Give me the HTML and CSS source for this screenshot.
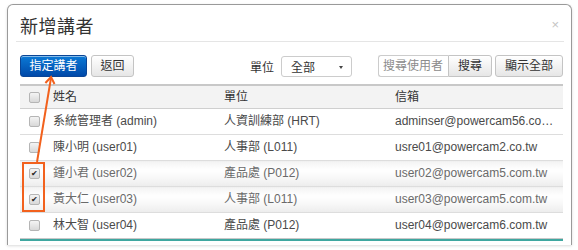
FILE: index.html
```html
<!DOCTYPE html>
<html lang="zh-Hant">
<head>
  <meta charset="UTF-8">
  <title>新增講者</title>
  <link rel="stylesheet" href="styles.css">
</head>
<body>

  <div class="modal">
    <div class="modal-header">
      <h3>新增講者</h3>
      <span class="close">×</span>
    </div>

    <div class="modal-body">
      <div class="toolbar">
        <div class="toolbar-left">
          <button class="btn btn-primary">指定講者</button>
          <button class="btn btn-back">返回</button>
        </div>
        <div class="toolbar-right">
          <span class="label">單位</span>
          <div class="select">全部<span class="caret"></span></div>
          <div class="search">
            <input type="text" placeholder="搜尋使用者">
            <button class="btn">搜尋</button>
          </div>
          <button class="btn btn-all">顯示全部</button>
        </div>
      </div>

      <div class="table-wrap">
        <table class="user-table">
          <colgroup>
            <col class="col-check">
            <col class="col-name">
            <col class="col-unit">
            <col class="col-mail">
          </colgroup>
          <thead>
            <tr>
              <th><span class="cb"></span></th>
              <th>姓名</th>
              <th>單位</th>
              <th>信箱</th>
            </tr>
          </thead>
          <tbody>
            <tr>
              <td><span class="cb"></span></td>
              <td>系統管理者 (admin)</td>
              <td>人資訓練部 (HRT)</td>
              <td>adminser@powercam56.com.tw</td>
            </tr>
            <tr>
              <td><span class="cb"></span></td>
              <td>陳小明 (user01)</td>
              <td>人事部 (L011)</td>
              <td>usre01@powercam2.co.tw</td>
            </tr>
            <tr class="selected">
              <td><span class="cb checked">✔</span></td>
              <td>鍾小君 (user02)</td>
              <td>產品處 (P012)</td>
              <td>user02@powercam5.com.tw</td>
            </tr>
            <tr class="selected">
              <td><span class="cb checked">✔</span></td>
              <td>黃大仁 (user03)</td>
              <td>人事部 (L011)</td>
              <td>user03@powercam5.com.tw</td>
            </tr>
            <tr>
              <td><span class="cb"></span></td>
              <td>林大智 (user04)</td>
              <td>產品處 (P012)</td>
              <td>user04@powercam6.com.tw</td>
            </tr>
          </tbody>
        </table>
      </div>
    </div>
  </div>

  <!-- annotation: box round the checked rows, arrow to the button -->
  <svg class="annot" width="578" height="250" viewBox="0 0 578 250">
    <rect x="23" y="163" width="21" height="48" fill="none" stroke="#f2611d" stroke-width="2"/>
    <line x1="37" y1="162" x2="51" y2="78" stroke="#f2611d" stroke-width="2"/>
    <polyline points="45.4,83 51,77 54.5,84" fill="none" stroke="#f2611d" stroke-width="2"/>
  </svg>

</body>
</html>
```

FILE: styles.css
```css
body {
  margin: 0;
  background-color: #fff;
  font-family: "Liberation Sans", "Noto Sans CJK TC", sans-serif;
  color: #333;
  width: 578px;
  height: 250px;
  position: relative;
  overflow: hidden;
}

.modal {
  margin: 4px 0 0 7px;
  width: 565px;
  height: 241px;
  box-sizing: border-box;
  background-color: #fff;
  border: 1px solid #9a9a9a;
  border-bottom: none;
  border-radius: 6px 6px 0 0;
  box-shadow: 0 1px 3px rgba(0, 0, 0, 0.15);
}

.modal-header {
  margin: 0 7px 0 8px;
  padding: 8px 4px 0;
  height: 37px;
  box-sizing: border-box;
  border-bottom: 1px solid #e5e5e5;
  display: flex;
  justify-content: space-between;
  align-items: center;
}

.modal-header h3 {
  margin: 0;
  font-size: 18px;
  font-weight: normal;
  line-height: 24px;
  color: #333;
  letter-spacing: 0.5px;
}

.close {
  font-size: 13px;
  color: #c4c4c4;
  margin-right: 1px;
  margin-top: -6px;
}

.modal-body {
  padding: 13px 8px 0 12px;
}

.toolbar {
  display: flex;
  justify-content: space-between;
  align-items: center;
  height: 22px;
}

.toolbar-left,
.toolbar-right {
  display: flex;
  align-items: center;
}

.btn {
  height: 22px;
  box-sizing: border-box;
  padding: 0;
  font-family: inherit;
  font-size: 12px;
  line-height: 20px;
  white-space: nowrap;
  text-align: center;
  color: #333;
  background: linear-gradient(#fff, #e6e6e6);
  border: 1px solid #c4c4c4;
  border-radius: 3px;
  box-shadow: inset 0 1px 0 rgba(255, 255, 255, 0.5);
}

.toolbar-left .btn {
  margin-right: 4px;
}

.btn-primary {
  width: 67px;
  color: #fff;
  background: linear-gradient(#0b7ad6, #0049a9);
  border-color: #0a4596;
}

.btn-back {
  width: 43px;
}

.label {
  font-size: 12px;
  margin-right: 7px;
}

.select {
  width: 71px;
  height: 21px;
  box-sizing: border-box;
  border: 1px solid #ccc;
  border-radius: 3px;
  font-size: 12px;
  line-height: 22px;
  padding-left: 9px;
  position: relative;
  margin-right: 26px;
}

.caret {
  position: absolute;
  right: 8px;
  top: 9px;
  border-left: 2px solid transparent;
  border-right: 2px solid transparent;
  border-top: 3px solid #444;
}

.search {
  display: flex;
  margin-right: 3px;
}

.search input {
  width: 70px;
  height: 22px;
  box-sizing: border-box;
  padding: 0 4px;
  font-family: inherit;
  font-size: 12px;
  border: 1px solid #ccc;
  border-right: none;
  border-radius: 3px 0 0 3px;
  outline: none;
}

.search input::placeholder {
  color: #8c8c8c;
}

.search .btn {
  width: 44px;
  border-radius: 0 3px 3px 0;
}

.btn-all {
  width: 68px;
}

.table-wrap {
  margin-top: 7px;
  width: 543px;
  border-bottom: 2px solid #3fa7a0;
}

.user-table {
  width: 100%;
  table-layout: fixed;
  border-collapse: collapse;
  border-top: 2px solid #c8c8c8;
  font-size: 12px;
}

.col-check { width: 27px; }
.col-name { width: 171px; }
.col-unit { width: 171px; }
.col-mail { width: 174px; }

.user-table th,
.user-table td {
  text-align: left;
  font-weight: normal;
  white-space: nowrap;
  overflow: hidden;
  text-overflow: ellipsis;
  padding: 0 6px;
  line-height: 17px;
}

.user-table th {
  height: 22px;
  background-color: #f3f3f3;
  border-bottom: 1px solid #cfcfcf;
  color: #333;
}

.user-table td {
  height: 25px;
  border-bottom: 1px solid #ddd;
  color: #4a4a4a;
}

.user-table tbody tr:last-child td {
  border-bottom-color: #c8c8c8;
}

.user-table th:first-child,
.user-table td:first-child {
  padding: 0 0 0 9px;
}

.user-table tr.selected td {
  background: linear-gradient(#f3f3f3, #fff 35%, #f6f6f6 70%, #ececec);
  color: #6a6a6a;
}

.cb {
  display: block;
  width: 9px;
  height: 9px;
  border: 1px solid #b5b5b5;
  border-radius: 2px;
  background: linear-gradient(#f4f4f4, #d8d8d8);
  font-size: 8px;
  line-height: 9px;
  text-align: center;
  color: #222;
}

.annot {
  position: absolute;
  left: 0;
  top: 0;
  pointer-events: none;
}
```
